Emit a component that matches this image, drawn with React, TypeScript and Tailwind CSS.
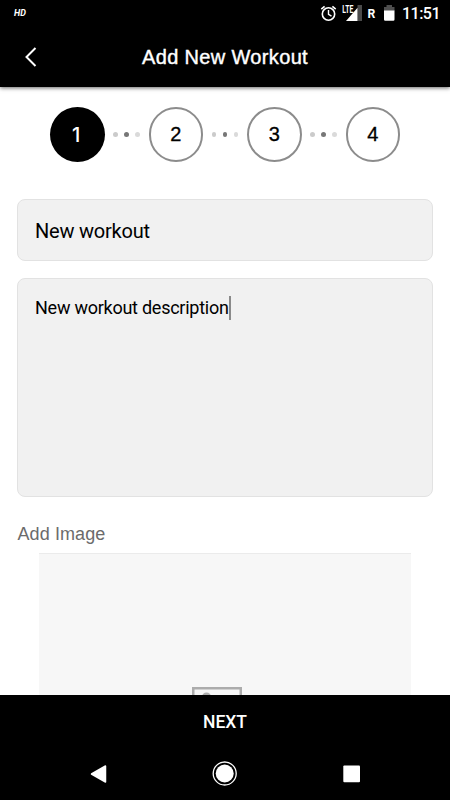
import React from "react";

function StatusBar() {
  return (
    <div className="flex h-[27px] items-center justify-between pl-[14px] pr-[9px] text-white font-['Roboto',sans-serif]">
      <span className="text-[9px] font-bold italic leading-none">HD</span>
      <div className="flex h-full items-center">
        <svg width="121" height="27" viewBox="0 0 121 27" fill="none">
          <g stroke="#fff">
            <circle cx="8.500" cy="14" r="6.200" strokeWidth="1.600" />
            <path d="M8.500 10v4.400l3 1.800" strokeWidth="1.400" />
            <path d="M1.300 9.200L4.600 6.300M15.700 9.200L12.400 6.300" strokeWidth="1.600" />
          </g>
          <path d="M37.500 5H42v16h-4.500z" fill="#4a4a4a" />
          <path d="M37.500 7.800V21H26z" fill="#fff" />
          <text x="22.300" y="12.500" fill="#fff" fontSize="10" fontWeight="700" textLength="11" lengthAdjust="spacingAndGlyphs">LTE</text>
          <text x="47.500" y="18" fill="#fff" fontSize="13.500" fontWeight="700" textLength="7.800" lengthAdjust="spacingAndGlyphs">R</text>
          <path d="M66.500 5h5.500v2h2.500v4h-10.500V7h2.500z" fill="#4f4f4f" />
          <path d="M64 10.500h10.500v9a1.200 1.200 0 0 1-1.200 1.200h-8.100A1.200 1.200 0 0 1 64 19.500z" fill="#fff" />
          <text x="82" y="19.300" fill="#fff" fontSize="16" fontWeight="500" textLength="38.500" lengthAdjust="spacing">11:51</text>
        </svg>
      </div>
    </div>
  );
}

function Header() {
  return (
    <header className="relative z-10 h-[87px] shrink-0 bg-black shadow-[0_1px_4px_rgba(0,0,0,0.6)]">
      <StatusBar />
      <div className="grid h-[60px] grid-cols-[60px_1fr_60px] items-center">
        <svg className="ml-[24px]" width="14" height="22" viewBox="0 0 14 22" fill="none">
          <path d="M11.500 2L2.500 11l9 9" stroke="#fff" strokeWidth="2" />
        </svg>
        <h1 className="whitespace-nowrap text-center text-[20px] leading-[24px] tracking-[0.35px] text-white font-['Liberation_Sans',sans-serif] [-webkit-text-stroke:0.4px_white]">
          Add New Workout
        </h1>
      </div>
    </header>
  );
}

function Step({ n, active }: { n: number; active?: boolean }) {
  return (
    <div
      className={
        "flex size-[54.500px] shrink-0 items-center justify-center rounded-full leading-none " +
        (active
          ? "bg-black pr-[2px] pt-px text-[20px] font-medium text-white font-['Inter',sans-serif]"
          : "border-2 border-[#8c8c8c] text-[20px] text-black font-['Liberation_Sans',sans-serif] [-webkit-text-stroke:0.3px_black]")
      }
    >
      {n}
    </div>
  );
}

function Dots() {
  return (
    <div className="flex w-[44px] shrink-0 items-center justify-center gap-[6.500px]">
      <i className="size-[4.500px] rounded-full bg-[#cbcbcb]" />
      <i className="size-[4.500px] rounded-full bg-[#777777]" />
      <i className="size-[4.500px] rounded-full bg-[#dadada]" />
    </div>
  );
}

export default function App() {
  return (
    <div className="flex h-[800px] w-[450px] flex-col overflow-hidden bg-white">
      <Header />
      <main className="min-h-0 flex-1 overflow-hidden px-[17px] pt-[20px]">
        <div className="flex items-center justify-center">
          <Step n={1} active />
          <Dots />
          <Step n={2} />
          <Dots />
          <Step n={3} />
          <Dots />
          <Step n={4} />
        </div>
        <div className="mt-[37.500px] flex h-[62px] items-center rounded-[8px] border-[1.500px] border-[#e2e2e2] bg-[#f1f1f1] pl-[17px] pt-[2px] text-[20px] tracking-[-0.22px] text-black font-['Roboto',sans-serif]">
          <span>New workout</span>
        </div>
        <div className="mt-[17px] flex h-[219px] items-start rounded-[8px] border-[1.500px] border-[#e2e2e2] bg-[#f1f1f1] pl-[17px] pt-[17px] text-[18px] leading-[24px] tracking-[-0.250px] text-black font-['Roboto',sans-serif]">
          <span>New workout description</span>
          <span className="h-[24px] w-[2px] bg-[#8a8a8a]" />
        </div>
        <h2 className="mt-[26px] pl-[0.500px] text-[18px] leading-[22px] tracking-[0.1px] text-[#6b6b6b] font-['Liberation_Sans',sans-serif]">Add Image</h2>
        <div className="ml-[22px] mt-[8px] flex h-[320px] w-[372px] justify-center border-t border-[#ebebeb] bg-[#f7f7f7] pt-[133px]">
          <svg className="mr-[16px]" width="50" height="40" viewBox="0 0 50 40" fill="none">
            <rect x="1.250" y="1.250" width="47.500" height="37.500" stroke="#acacac" strokeWidth="2.500" />
            <circle cx="14.500" cy="10" r="4.500" fill="#acacac" />
          </svg>
        </div>
      </main>
      <footer className="h-[105px] shrink-0 bg-black text-white">
        <button className="flex h-[53px] w-full items-center justify-center pt-[2px] text-[17.500px] font-medium font-['Roboto',sans-serif]">NEXT</button>
        <nav className="h-[52px]">
          <svg width="450" height="52" viewBox="0 0 450 52" fill="none">
            <path d="M91.500 26L105.500 18v16z" fill="#fff" stroke="#fff" strokeWidth="1.500" strokeLinejoin="round" />
            <circle cx="224.700" cy="25.500" r="11.500" stroke="#fff" strokeWidth="1.300" />
            <circle cx="224.700" cy="25.500" r="9" fill="#fff" />
            <rect x="343.300" y="17.500" width="16.700" height="16.700" rx="1" fill="#fff" />
          </svg>
        </nav>
      </footer>
    </div>
  );
}
